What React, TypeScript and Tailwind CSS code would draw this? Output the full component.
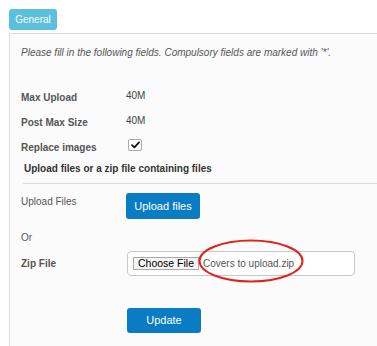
import React from "react";

const font = { fontFamily: '"Liberation Sans", Arial, sans-serif' };

function Row({ label, children, className = "" }: { label: string; children?: React.ReactNode; className?: string }) {
  return (
    <div className={`flex items-center ${className}`}>
      <div className="w-[105px] shrink-0 text-[10px] font-bold text-[#555]">{label}</div>
      <div className="flex-1">{children}</div>
    </div>
  );
}

export default function App() {
  return (
    <div className="w-[377px] h-[346px] overflow-hidden bg-white pt-[9px] pl-[9px]" style={font}>
      {/* Tab */}
      <div className="w-[48px] h-[21px] rounded-[3px] bg-[#5bc0de] text-white text-[10px] flex items-center justify-center">
        General
      </div>

      {/* Panel */}
      <div className="mt-[3px] h-[320px] border-l border-t border-[#dcdcdc] bg-[#fbfbfb] pl-[11px]">
        <p className="mt-[13px] h-[12px] text-[10px] italic text-[#555] leading-[12px] whitespace-nowrap">
          Please fill in the following fields. Compulsory fields are marked with '*'.
        </p>

        <Row label="Max Upload" className="mt-[32px] h-[12px]">
          <span className="relative -top-[3px] text-[10px] text-[#444]">40M</span>
        </Row>
        <Row label="Post Max Size" className="mt-[13px] h-[12px]">
          <span className="relative -top-[3px] text-[10px] text-[#444]">40M</span>
        </Row>
        <Row label="Replace images" className="mt-[13px] h-[12px]">
          <div className="relative -top-[2px] ml-[2px] w-[14px] h-[12px] rounded-[2px] border border-[#aaa] bg-white flex items-center justify-center">
            <svg width="9" height="8" viewBox="0 0 9 8">
              <path d="M1 4.2 L3.4 6.4 L8 1.4" fill="none" stroke="#111" strokeWidth="1.8" strokeLinecap="round" strokeLinejoin="round" />
            </svg>
          </div>
        </Row>

        <div className="mt-[10px] pl-[3px] text-[10px] font-bold text-[#333] h-[12px] leading-[12px]">
          Upload files or a zip file containing files
        </div>
        <div className="mt-[8px] ml-[2px] border-t border-[#ddd]" />

        <div className="mt-[9px] flex items-start">
          <div className="w-[105px] shrink-0 pt-[1px] text-[10px] text-[#555]">Upload Files</div>
          <button className="w-[74px] h-[26px] rounded-[3px] bg-[#0a7cc4] text-white text-[11px]">
            Upload files
          </button>
        </div>

        <div className="mt-[13px] h-[12px] text-[10px] text-[#555] leading-[12px]">Or</div>

        <div className="mt-[7px] flex items-center">
          <div className="w-[106px] shrink-0 text-[10px] font-bold text-[#555]">Zip File</div>
          <div className="relative w-[228px] h-[25px] rounded-[4px] border border-[#c8c8c8] bg-white flex items-center pl-[5px]">
            <div className="h-[13px] w-[66px] border border-[#a9a9a9] bg-[#f5f5f5] text-[10.5px] text-black flex items-center justify-center leading-none">
              Choose File
            </div>
            <span className="ml-[4px] text-[10px] text-[#555]">Covers to upload.zip</span>
            <svg className="absolute left-[69px] -top-[13px] pointer-events-none" width="108" height="46" viewBox="0 0 108 46">
              <ellipse cx="54" cy="22" rx="51.5" ry="20.5" fill="none" stroke="#e1241b" strokeWidth="2" />
            </svg>
          </div>
        </div>

        <div className="mt-[31px] pl-[106px]">
          <button className="w-[74px] h-[25px] rounded-[3px] bg-[#0a7cc4] text-white text-[11px]">Update</button>
        </div>
      </div>
    </div>
  );
}
